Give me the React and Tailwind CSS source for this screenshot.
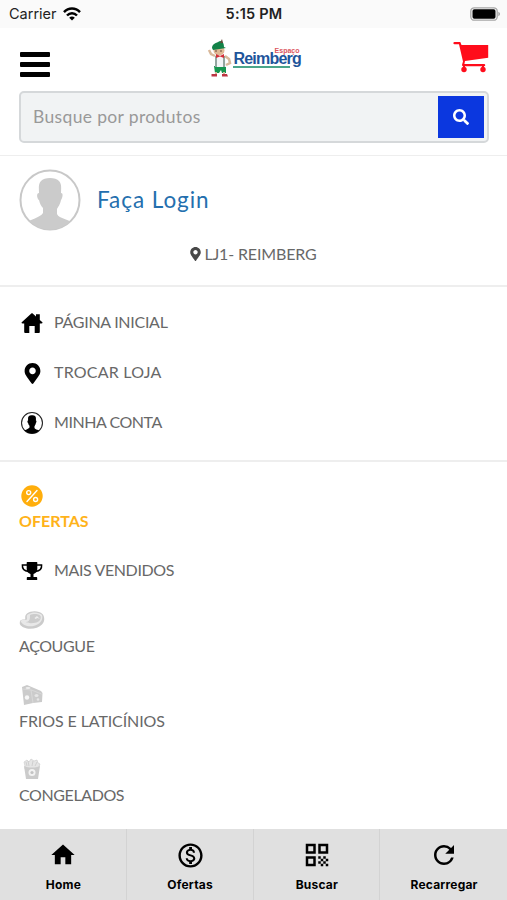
import React from 'react';
import { FaMapMarkerAlt, FaSearch } from 'react-icons/fa';
import { MdHome, MdOutlineMonetizationOn, MdQrCode, MdRefresh } from 'react-icons/md';

function WifiIcon() {
  return (
    <svg viewBox="0 0 18 14" className="w-[18px] h-[14px]" fill="none" stroke="#000" strokeWidth="2.5">
      <path d="M1 5.2C5.500 .4 12.500 .4 17 5.200" />
      <path d="M4 8.500c2.900-3 7.100-3 10 0" />
      <path d="M9 13.500 6.200 10.700c1.600-1.500 4-1.500 5.600 0z" fill="#000" stroke="none" />
    </svg>
  );
}

function BatteryIcon() {
  return (
    <svg viewBox="0 0 31 14" className="w-[31px] h-[14px]">
      <rect x=".8" y=".8" width="26.400" height="12.400" rx="3.500" fill="#fafafa" stroke="#a6a6a6" strokeWidth="1.300" />
      <rect x="2.500" y="2.300" width="23" height="9.400" rx="1.800" fill="#000" />
      <path d="M28.300 4.800c2.300.8 2.300 3.600 0 4.400z" fill="#a6a6a6" />
    </svg>
  );
}

function Mascot() {
  return (
    <svg viewBox="0 0 25 38" className="w-[25px] h-[38px] shrink-0">
      <path d="M7 27h12v7h-4l-1-3-2 3H8z" fill="#16964f" />
      <path d="M8 16h10l1 12H8z" fill="#f3f4f6" />
      <path d="m8 17-4-2-2-4M18 17l4 3 1 4-4 2" fill="none" stroke="#d9b99b" strokeWidth="2.500" />
      <path d="M9 17v11m8-11v11" stroke="#36594b" strokeWidth="1" />
      <ellipse cx="12" cy="11.500" rx="5.500" ry="5" fill="#dfb894" />
      <path d="M8 12h2m3 0h2" stroke="#6b4b38" strokeWidth="1" />
      <path d="M5 9c0-4 4-5 8-7 3 0 4 3 4 6l2 1-13 2z" fill="#138248" />
      <path d="m13 4 2-4 1 4z" fill="#654939" />
      <path d="m9 15 4 2 4-2v4l-4-1.500L9 19z" fill="#d52d37" />
      <path d="M9 33v2m8-2v2" stroke="#d9b99b" strokeWidth="2" />
      <path d="M4.500 35H10v2.500H4.500zM15 35h5l1 2.500h-6z" fill="#bd3444" />
    </svg>
  );
}

function Logo() {
  return (
    <div className="flex w-[93px] h-[38px] font-['Liberation_Sans',sans-serif]">
      <Mascot />
      <div className="w-[66px] ml-[1px] pt-[9px]">
        <div className="h-[6px] text-right text-[7px] leading-[6px] font-bold text-[#dc555d]">Espaço</div>
        <div className="h-[12px] text-[16px] leading-[9px] font-bold tracking-[-0.8px] text-[#1e559b]">Reimberg</div>
        <div className="w-[57px] h-[2px] bg-[#4aa58a]" />
      </div>
    </div>
  );
}

function CartIcon() {
  return (
    <svg viewBox="0 0 36 31" className="w-[36px] h-[31px]" fill="#ff0c1b">
      <path d="M1.500 0h5.800l1.200 3h26.700v12.700L12 19l-.6 3H31c1.700 0 1.700 2.300 0 2.300H10.500c-1 0-1.700-.8-1.400-1.800l.9-3L6 2.300H1.500C0 2.300 0 0 1.500 0z" />
      <circle cx="11" cy="27.500" r="2.700" />
      <circle cx="30" cy="27.500" r="2.700" />
      <path d="M10 23h2v4h-2zm19 0h2v4h-2z" />
    </svg>
  );
}

function Avatar({ className, ring, fill, id, stroke = 2 }) {
  return (
    <svg viewBox="0 0 62 62" className={className}>
      <clipPath id={id}>
        <circle cx="31" cy="31" r="29.500" />
      </clipPath>
      <circle cx="31" cy="31" r="29.500" fill="#fff" stroke={ring} strokeWidth={stroke} />
      <path
        clipPath={`url(#${id})`}
        fill={fill}
        d="M22 12c3-4 15-4 18 0 3 3 2 8 2 12 3 0 1 6 0 7-1 5-3 7-4 9v5c2 5 13 5 16 10l-8 8H14L7 54c4-4 14-5 17-10v-5c-2-2-3-4-4-8-2-1-3-7 0-7 0-4-1-9 2-12z"
      />
    </svg>
  );
}

function HouseIcon() {
  return (
    <svg viewBox="0 0 22 22" className="w-[22px] h-[22px]">
      <path d="M10.300 1.600c.5-.4.9-.4 1.400 0L15 4.500V2.300h3.800v5.600l2.300 2.200c.8.8.5 1.400-.7 1.400h-1.600v8.200c0 1-.4 1.400-1.400 1.400h-3.700V14H8.300v7.100H4.700c-1 0-1.500-.4-1.500-1.400v-8.200H1.600C.4 11.500.2 10.900 1 10.100z" />
    </svg>
  );
}

function PercentIcon() {
  return (
    <svg viewBox="0 0 22 22" className="w-[22px] h-[22px]" fill="none" stroke="#fff" strokeWidth="1.400">
      <circle cx="11" cy="11" r="10.700" fill="#ffae0c" stroke="none" />
      <path d="M16 5.500 6 16.500" strokeLinecap="round" />
      <circle cx="7.700" cy="7.600" r="2" />
      <circle cx="14.600" cy="14.500" r="2" />
    </svg>
  );
}

function TrophyIcon() {
  return (
    <svg viewBox="0 0 22 20" className="w-[22px] h-[20px]">
      <path d="M6 4H1.400c-.3 3.500 2 6 6.100 6.400M16 4h4.600c.3 3.500-2 6-6.100 6.400" fill="none" stroke="#000" strokeWidth="1.500" />
      <path d="M6.200 1h9.600c.3 0 .5.200.5.500v6.700c0 2.300-1.500 3.900-3.800 4.800V16h2.700c.7 0 1 .4 1 1v2H5.800v-2c0-.6.300-1 1-1h2.700v-3c-2.300-.9-3.800-2.500-3.800-4.800V1.500c0-.3.200-.5.500-.5z" />
    </svg>
  );
}

function SteakIcon() {
  return (
    <svg viewBox="0 0 26 20" className="w-[26px] h-[20px]">
      <path d="M.8 12c0-2 2-2.500 5-2.500C7 9 5 6 8 3.500c4-3 12-3 15.500.5 2.500 3 2.300 7.500-.5 10.500-5 5.500-19 6-22.200-.5z" fill="#cbcbcb" />
      <path d="M1.500 11c1-2 4-.5 6.500-1.500 0-3-1-4 1.500-5.500 4-2.500 11-2 13.500 1 1.500 5-2 9.500-8.500 11C9 17 3.500 15.500 1.500 11z" fill="#e8e8e8" />
      <path d="M11 5c3-1.500 8.500-1.500 10.500 1 1 3-1 5.500-4 6.500-4 1-9 1-10.500-.5 4-.5 4-3 4-7z" fill="#cccccc" />
      <path d="m15.500 8 2.500-2 3 3-2.500-1-2 1z" fill="#eee" />
    </svg>
  );
}

function CheeseIcon() {
  return (
    <svg viewBox="0 0 22 22" className="w-[22px] h-[22px]">
      <path d="m1 3 5-2 14 6 1.500 2-.5 9-9 1-9 2z" fill="#cbcbcb" />
      <path d="m1.500 5 9 1 10 4M10 6l2 13" fill="none" stroke="#dcdcdc" strokeWidth=".8" />
      <circle cx="6" cy="13.500" r="2.200" fill="#f6f6f6" />
      <ellipse cx="15.500" cy="11.500" rx="2" ry="1.500" fill="#e6e6e6" />
      <circle cx="17" cy="15.500" r="1.300" fill="#e6e6e6" />
      <ellipse cx="7" cy="4" rx="2.500" ry="1" fill="#eee" />
    </svg>
  );
}

function FriesIcon() {
  return (
    <svg viewBox="0 0 22 22" className="w-[22px] h-[22px]">
      <path d="m4 8-1-4 3-2 2 2 2-3 3 2 3-1 1 3 2 1-2 5H4z" fill="#e5e5e5" stroke="#cfcfcf" strokeWidth=".7" />
      <path d="m7 3 1 5m4-5-1 5m5-4-2 4M5 4l1 4" stroke="#c9c9c9" strokeWidth=".8" />
      <path d="M3 8c5 2 11 2 16 0l-2 13H5z" fill="#cbcbcb" />
      <circle cx="11" cy="14.500" r="3.500" fill="#f2f2f2" />
      <circle cx="11" cy="14.500" r="1.600" fill="#c3c3c3" />
    </svg>
  );
}

function MenuRow({ icon, label, className }) {
  return (
    <div className="flex items-center h-[50px]">
      <span className="flex justify-center w-[25px] pl-[1px] mr-[10px]">{icon}</span>
      <span className={`pb-[2px] whitespace-nowrap ${className}`}>{label}</span>
    </div>
  );
}

function Category({ icon, label, className }) {
  return (
    <div className="h-[74.500px]">
      <div className="flex items-center justify-center w-[26px] h-[24px]">{icon}</div>
      <div className={`mt-[2px] leading-[24px] whitespace-nowrap ${className}`}>{label}</div>
    </div>
  );
}

const tabs = [
  { label: 'Home', icon: <MdHome className="size-[28px]" /> },
  { label: 'Ofertas', icon: <MdOutlineMonetizationOn className="size-[29px]" /> },
  { label: 'Buscar', icon: <MdQrCode className="size-[30px]" /> },
  { label: 'Recarregar', icon: <MdRefresh className="size-[30px]" /> },
];

export default function App() {
  return (
    <div className="flex flex-col w-[507px] h-[900px] overflow-hidden bg-white text-[16px] text-[#686868] font-['Lato',sans-serif]">
      <div className="grid grid-cols-3 items-center h-[28px] shrink-0 pl-[9px] pr-[8px] bg-[#fafafa] text-[#222] text-[14.500px] font-['Inter',sans-serif]">
        <div className="flex items-center gap-[6px]">
          <span>Carrier</span>
          <WifiIcon />
        </div>
        <span className="text-center text-[14.500px] tracking-[0.2px] font-semibold">5:15 PM</span>
        <div className="flex justify-end -mr-[2px]">
          <BatteryIcon />
        </div>
      </div>

      <header className="h-[128px] shrink-0 pl-[19px] pr-[18px] border-b border-[#eeeeee]">
        <div className="grid grid-cols-3 h-[63px]">
          <div className="flex flex-col gap-[5px] pt-[24px] pl-[1px]">
            <span className="w-[30px] h-[5px] rounded-[1px] bg-black" />
            <span className="w-[30px] h-[5px] rounded-[1px] bg-black" />
            <span className="w-[30px] h-[5px] rounded-[1px] bg-black" />
          </div>
          <div className="flex justify-center pt-[11px]">
            <Logo />
          </div>
          <div className="flex justify-end pt-[14px]">
            <CartIcon />
          </div>
        </div>
        <div className="flex items-center justify-between h-[52px] pl-[12px] pr-[3px] border-2 border-[#d5d8da] rounded-[5px] bg-[#f1f3f4]">
          <span className="text-[17.500px] tracking-[0.35px] text-[#999]">Busque por produtos</span>
          <button className="flex items-center justify-center w-[46px] h-[42px] bg-[#0b37df] text-white">
            <FaSearch className="size-[16px]" />
          </button>
        </div>
      </header>

      <section className="h-[131px] shrink-0 px-[19px] pt-[13px] border-b-2 border-[#eeeeee]">
        <div className="flex items-center">
          <Avatar id="login" className="size-[62px]" ring="#c8c8c8" fill="#cbcbcb" />
          <span className="ml-[16px] text-[22.500px] tracking-[0.95px] text-[#246fae]">Faça Login</span>
        </div>
        <div className="flex items-center justify-center gap-[3px] mt-[11px] leading-[24px]">
          <FaMapMarkerAlt className="w-[11px] h-[14px] text-[#484848]" />
          <span className="tracking-[-0.15px]">LJ1- REIMBERG</span>
        </div>
      </section>

      <nav className="h-[175px] shrink-0 px-[19px] pt-[11px] border-b-2 border-[#eeeeee]">
        <MenuRow icon={<HouseIcon />} label="PÁGINA INICIAL" className="tracking-[-0.28px]" />
        <MenuRow icon={<FaMapMarkerAlt className="w-[17px] h-[21px] text-black" />} label="TROCAR LOJA" className="tracking-[0.22px]" />
        <MenuRow icon={<Avatar id="account" className="size-[22px]" ring="#222" fill="#000" stroke={3} />} label="MINHA CONTA" className="tracking-[-0.45px]" />
      </nav>

      <nav className="flex-1 min-h-0 overflow-hidden px-[19px] pt-[22px]">
        <div className="h-[62px]">
          <div className="flex justify-center w-[25px] pl-[1px] h-[24px] pt-[1px]"><PercentIcon /></div>
          <div className="mt-[1px] leading-[24px] font-bold text-[#ffb31a]">OFERTAS</div>
        </div>
        <MenuRow icon={<TrophyIcon />} label="MAIS VENDIDOS" className="tracking-[-0.38px]" />
        <div className="pt-[12px]">
          <Category icon={<SteakIcon />} label="AÇOUGUE" className="tracking-[-0.4px]" />
          <Category icon={<CheeseIcon />} label="FRIOS E LATICÍNIOS" className="tracking-[-0.1px]" />
          <Category icon={<FriesIcon />} label="CONGELADOS" className="tracking-[-0.4px]" />
        </div>
      </nav>

      <footer className="grid grid-cols-4 h-[71px] shrink-0 bg-[#e0e0e0] text-black font-['Inter',sans-serif]">
        {tabs.map((tab) => (
          <button key={tab.label} className="flex flex-col items-center pt-[11px] pl-[1px] border-r border-[#d3d3d3] last:border-r-0">
            <span className="flex items-center justify-center h-[30px]">{tab.icon}</span>
            <span className="mt-[7px] text-[12px] leading-[16px] tracking-[0.2px] font-bold">{tab.label}</span>
          </button>
        ))}
      </footer>
    </div>
  );
}
